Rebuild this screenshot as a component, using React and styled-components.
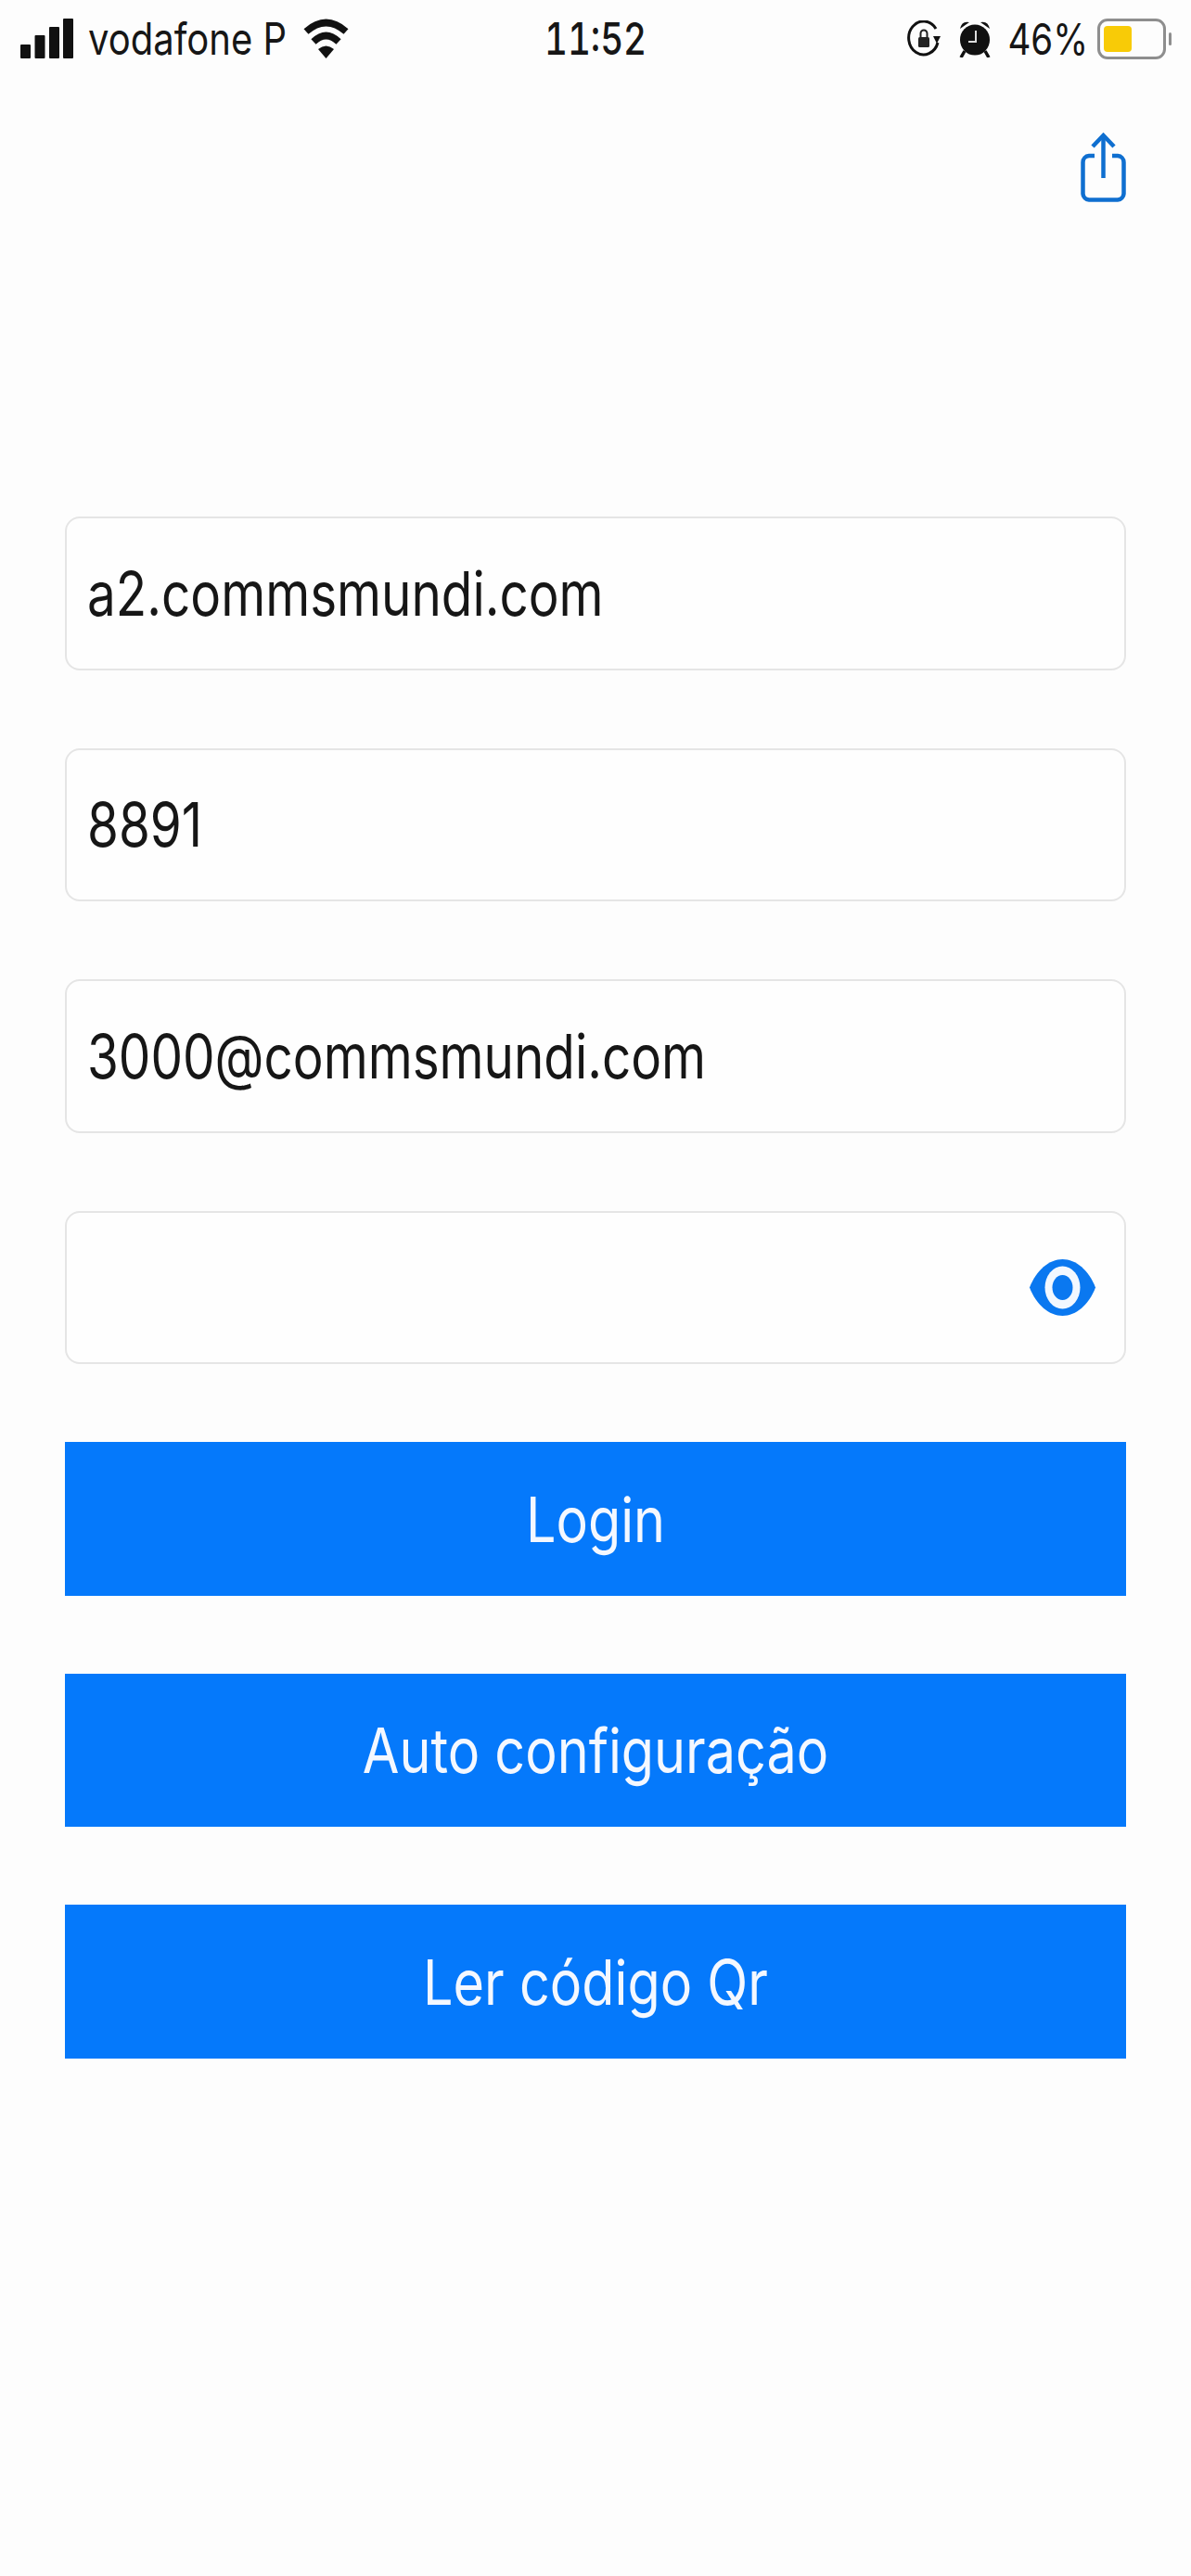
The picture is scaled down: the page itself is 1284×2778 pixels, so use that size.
import React from "react";
import styled, { createGlobalStyle } from "styled-components";

const GlobalStyle = createGlobalStyle`
  html, body {
    margin: 0;
    padding: 0;
    background: #fdfdfd;
  }
  * {
    box-sizing: border-box;
  }
`;

const Page = styled.div`
  width: 1284px;
  height: 2778px;
  background: #fdfdfd;
  color: #161616;
  font-family: Inter, "Liberation Sans", Arial, sans-serif;
  overflow: hidden;
`;

const StatusBar = styled.div`
  height: 84px;
  display: grid;
  grid-template-columns: 1fr auto 1fr;
  align-items: center;
  padding: 0 20px 0 22px;
`;

const StatusLeft = styled.div`
  display: flex;
  align-items: center;
`;

const StatusRight = styled.div`
  display: flex;
  align-items: center;
  justify-content: flex-end;
`;

// the whole screenshot is stretched vertically, so the text is too
const StatusText = styled.span`
  display: inline-block;
  font-size: ${(p) => p.$size || "40px"};
  line-height: 48px;
  transform: scaleY(1.2);
  margin: ${(p) => p.$margin || "0"};
`;

const Clock = styled(StatusText)`
  font-size: 38.5px;
  font-variant-numeric: tabular-nums;
  font-weight: 500;
  transform: translateX(-1px) scaleY(1.24);
`;

const SignalBars = styled.svg`
  width: 57px;
  height: 43px;
  flex: none;
  margin-top: -2px;
`;

const WifiIcon = styled.svg`
  width: 49px;
  height: 43px;
  flex: none;
  margin-left: 18px;
  margin-top: -2px;
`;

const RotationIcon = styled.svg`
  width: 36px;
  height: 40px;
  flex: none;
`;

const AlarmIcon = styled.svg`
  width: 34px;
  height: 40px;
  flex: none;
  margin: 0 18px 0 20px;
`;

const Battery = styled.div`
  position: relative;
  width: 74px;
  height: 44px;
  margin-left: 10px;
  margin-right: 7px;
  border: 3px solid #8e8e8e;
  border-radius: 11px;
  padding: 5px 4px;
  &::after {
    content: "";
    position: absolute;
    right: -9px;
    top: 12px;
    width: 3px;
    height: 14px;
    background: #8e8e8e;
    border-radius: 2px;
  }
`;

const BatteryFill = styled.div`
  width: 50%;
  height: 100%;
  background: #f8cb07;
  border-radius: 4px;
`;

const NavBar = styled.div`
  display: flex;
  justify-content: flex-end;
  padding: 59px 70px 0 0;
`;

const ShareIcon = styled.svg`
  width: 49px;
  height: 75px;
  display: block;
`;

const Form = styled.div`
  display: flex;
  flex-direction: column;
  gap: 84px;
  padding: 339px 70px 0;
`;

const Field = styled.div`
  height: 165.5px;
  display: flex;
  align-items: center;
  justify-content: space-between;
  padding: 0 30px 0 22px;
  background: #fefefe;
  border: 2px solid #e5e5e5;
  border-radius: 16px;
`;

const FieldText = styled.span`
  display: inline-block;
  font-size: 54.8px;
  line-height: 70px;
  transform: scaleY(1.2);
`;

const EyeIcon = styled.svg`
  width: 73px;
  height: 61px;
  margin-left: auto;
  flex: none;
`;

const Button = styled.div`
  height: 165.5px;
  display: flex;
  align-items: center;
  justify-content: center;
  background: #0579fb;
  color: #f4f8ff;
`;

const ButtonText = styled.span`
  display: inline-block;
  font-size: 57.5px;
  line-height: 70px;
  transform: translateY(1px) scaleY(1.16);
`;

const fields = ["a2.commsmundi.com", "8891", "3000@commsmundi.com"];
const buttons = ["Login", "Auto configuração", "Ler código Qr"];

const App = () => {
  return (
    <Page>
      <GlobalStyle />
      <StatusBar>
        <StatusLeft>
          <SignalBars viewBox="0 0 57 43">
            <rect x="0" y="28" width="11" height="15" rx="1" fill="#111" />
            <rect x="15.5" y="18" width="11" height="25" rx="1" fill="#111" />
            <rect x="31" y="9" width="11" height="34" rx="1" fill="#111" />
            <rect x="46" y="0" width="11" height="43" rx="1" fill="#111" />
          </SignalBars>
          <StatusText $margin="0 0 0 16px">vodafone P</StatusText>
          <WifiIcon viewBox="0 0 49 43">
            <path d="M3 14 Q24.5 -5 46 14" fill="none" stroke="#111" strokeWidth="7.5" />
            <path d="M11 25 Q24.5 12 38 25" fill="none" stroke="#111" strokeWidth="7.5" />
            <path d="M24.5 43 L16 33 Q24.5 26 33 33 Z" fill="#111" />
          </WifiIcon>
        </StatusLeft>
        <Clock>11:52</Clock>
        <StatusRight>
          <RotationIcon viewBox="0 0 36 40">
            <path d="M33 24 A16 18 0 1 1 31 9" fill="none" stroke="#111" strokeWidth="3" />
            <path d="M28 17 L36 17 L32 25 Z" fill="#111" />
            <rect x="12" y="18" width="12" height="11" rx="1.5" fill="#222" />
            <path d="M14.5 18 V14 A3.5 3.5 0 0 1 21.5 14 V18" fill="none" stroke="#222" strokeWidth="2" />
          </RotationIcon>
          <AlarmIcon viewBox="0 0 34 40">
            <ellipse cx="17" cy="21" rx="16" ry="16.5" fill="#111" />
            <path d="M1 9 Q3 0 11 2 Z" fill="#111" />
            <path d="M33 9 Q31 0 23 2 Z" fill="#111" />
            <path d="M6 33 L2 40 M28 33 L32 40" stroke="#111" strokeWidth="3.5" />
            <path d="M18 11 V23 H10" fill="none" stroke="#ddd" strokeWidth="2" />
          </AlarmIcon>
          <StatusText $size="38.5px">46%</StatusText>
          <Battery>
            <BatteryFill />
          </Battery>
        </StatusRight>
      </StatusBar>
      <NavBar>
        <ShareIcon viewBox="0 0 49 75" fill="none" stroke="#0f6fd0" strokeWidth="4.5">
          <path d="M24.5 3 V49" />
          <path d="M13 15 L24.5 3 L36 15" />
          <path d="M15 25 H9 A7 7 0 0 0 2.5 32 V66 A7 7 0 0 0 9 72.5 H40 A7 7 0 0 0 46.5 66 V32 A7 7 0 0 0 40 25 H34" />
        </ShareIcon>
      </NavBar>
      <Form>
        {fields.map((value) => (
          <Field key={value}>
            <FieldText>{value}</FieldText>
          </Field>
        ))}
        <Field>
          <EyeIcon viewBox="0 0 73 61">
            <path d="M1 30.5 C8 12 22 0 36.5 0 C51 0 65 12 72 30.5 C65 49 51 61 36.5 61 C22 61 8 49 1 30.5 Z" fill="#0a78f0" />
            <ellipse cx="36.5" cy="30.5" rx="19" ry="23" fill="#f2f8ff" />
            <ellipse cx="36.5" cy="30.5" rx="11" ry="13.5" fill="#0a78f0" />
          </EyeIcon>
        </Field>
        {buttons.map((label) => (
          <Button key={label}>
            <ButtonText>{label}</ButtonText>
          </Button>
        ))}
      </Form>
    </Page>
  );
};

export default App;
